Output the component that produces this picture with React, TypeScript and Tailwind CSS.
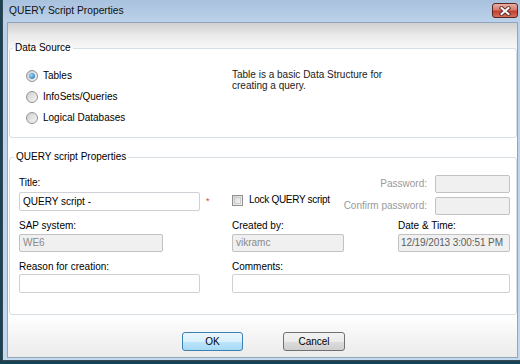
import clsx from 'clsx';

const Radio = ({ checked }: { checked?: boolean }) => (
  <span className="w-[12px] h-[12px] shrink-0 rounded-full border border-[#929292] bg-[linear-gradient(135deg,#cfcfcf,#f6f6f6)] flex items-center justify-center">
    {checked && (
      <span className="w-[6px] h-[6px] rounded-full bg-[radial-gradient(circle_at_35%_35%,#9bd6f6,#1a6eae)]" />
    )}
  </span>
);

const CheckBox = () => (
  <span className="w-[11px] h-[11px] shrink-0 border border-[#8e8f8f] bg-[linear-gradient(135deg,#d9d9d9,#f8f8f8)] p-[1px]">
    <span className="block w-full h-full border border-[#c9c9c9]" />
  </span>
);

const TextBox = ({ value, disabled, className }: { value?: string; disabled?: boolean; className?: string }) => (
  <div
    className={clsx(
      'flex items-center rounded-[2px] border whitespace-nowrap overflow-hidden',
      disabled ? 'bg-[#f0f0f0] border-[#c2c2c2] text-[#8a8a8a]' : 'bg-white border-[#cdd0d4] text-black',
      className
    )}
  >
    {value}
  </div>
);

const CloseButton = () => (
  <div className="self-start mt-[3px] w-[26px] h-[15px] rounded-[3px] border border-[#5c2520] bg-[linear-gradient(to_bottom,#e9b0a4,#d77b6f_45%,#c23f2f_55%,#d5705d)] flex items-center justify-center">
    <svg width="12" height="10" viewBox="0 0 12 10">
      <path d="M2.5 2 L9.5 8 M9.5 2 L2.5 8" stroke="#5a2823" strokeWidth="3.8" strokeLinecap="square" />
      <path d="M2.5 2 L9.5 8 M9.5 2 L2.5 8" stroke="#ffffff" strokeWidth="2" strokeLinecap="square" />
    </svg>
  </div>
);

const App = () => {
  return (
    <div className="w-[520px] h-[364px] overflow-hidden bg-[#164456] font-['Liberation_Sans',Arial,sans-serif] text-[10px] leading-[12px] text-black">
      <div className="ml-[2px] h-[361px] border-l border-b border-[#3a4650] bg-[linear-gradient(to_bottom,#a8c1dd,#bcd2ea_22px,#c4d8ee)] flex flex-col">
        {/* title bar */}
        <div className="h-[22px] shrink-0 flex items-center pl-[6px] pr-[2px]">
          <span className="text-[10.25px] text-[#111]">QUERY Script Properties</span>
          <div className="ml-auto self-stretch flex">
            <CloseButton />
          </div>
        </div>

        {/* client area */}
        <div className="ml-[4px] mr-[2px] mb-[2px] flex-1 border border-[#91a5bd] bg-[linear-gradient(to_bottom,#d0d0d0_0px,#e9e9e9_12px,#f7f7f7_24px,#ffffff_36px,#ffffff_292px,#ebebeb_100%)] flex flex-col pt-[19px] pl-[1px]">
          <fieldset className="bg-white border border-[#d5dfe5] rounded-[3px] min-w-0">
            <legend className="ml-[3px] px-[2px] leading-[12px]">Data Source</legend>
            <div className="flex pt-[11px] pb-[9px] pl-[16px]">
              <div className="w-[206px] flex flex-col">
                <div className="h-[21px] flex items-center gap-[5px]">
                  <Radio checked />
                  <span>Tables</span>
                </div>
                <div className="h-[21px] flex items-center gap-[5px]">
                  <Radio />
                  <span>InfoSets/Queries</span>
                </div>
                <div className="h-[21px] flex items-center gap-[5px]">
                  <Radio />
                  <span>Logical Databases</span>
                </div>
              </div>
              <p className="mt-[4px] leading-[11px] text-[#1a1a1a]">
                Table is a basic Data Structure for
                <br />
                creating a query.
              </p>
            </div>
          </fieldset>

          <fieldset className="mt-[13px] bg-white border border-[#d5dfe5] rounded-[3px] min-w-0">
            <legend className="ml-[4px] px-[2px] leading-[12px]">QUERY script Properties</legend>
            <div className="pt-[12px] pb-[21px] pl-[9px] pr-[6px]">
              {/* row A */}
              <div className="flex items-start">
                <div className="w-[213px] flex flex-col">
                  <span className="mt-[2px]">Title:</span>
                  <div className="mt-[3px] flex items-center">
                    <TextBox value="QUERY script -" className="w-[181px] h-[19px] px-[3px]" />
                    <span className="ml-[6px] text-[9px] leading-[9px] text-[#e23b3b]">*</span>
                  </div>
                </div>
                <div className="mt-[19px] flex items-center gap-[6px]">
                  <CheckBox />
                  <span className="tracking-[-0.3px]">Lock QUERY script</span>
                </div>
                <div className="ml-auto grid grid-cols-[auto_75px] gap-x-[8px] gap-y-[4px] items-center">
                  <span className="text-right text-[#9a9a9a]">Password:</span>
                  <TextBox disabled className="h-[18px]" />
                  <span className="text-right text-[#9a9a9a]">Confirm password:</span>
                  <TextBox disabled className="h-[18px]" />
                </div>
              </div>

              {/* row B */}
              <div className="mt-[5px] grid grid-cols-[213px_166px_112px]">
                <div className="flex flex-col">
                  <span>SAP system:</span>
                  <TextBox disabled value="WE6" className="mt-[2px] w-[144px] h-[18px] px-[3px]" />
                </div>
                <div className="flex flex-col">
                  <span>Created by:</span>
                  <TextBox disabled value="vikramc" className="mt-[2px] w-[112px] h-[18px] px-[3px]" />
                </div>
                <div className="flex flex-col">
                  <span>Date &amp; Time:</span>
                  <TextBox disabled value="12/19/2013 3:00:51 PM" className="mt-[2px] w-[112px] h-[18px] px-[2px] tracking-[-0.1px] !text-[#5e5e5e]" />
                </div>
              </div>

              {/* row C */}
              <div className="mt-[9px] grid grid-cols-[213px_278px]">
                <div className="flex flex-col">
                  <span>Reason for creation:</span>
                  <TextBox className="mt-[1px] w-[181px] h-[19px]" />
                </div>
                <div className="flex flex-col">
                  <span>Comments:</span>
                  <TextBox className="mt-[1px] w-full h-[19px]" />
                </div>
              </div>
            </div>
          </fieldset>

          <div className="mt-[17px] flex gap-[40px] pl-[173px]">
            <button className="w-[61px] h-[19px] rounded-[3px] border border-[#3c7fb1] bg-[linear-gradient(to_bottom,#eaf6fd,#d9f0fc_50%,#bee6fd_50%,#a7d9f5)] flex items-center justify-center text-[10px]">
              OK
            </button>
            <button className="w-[62px] h-[19px] rounded-[3px] border border-[#707070] bg-[linear-gradient(to_bottom,#f2f2f2,#ebebeb_50%,#dddddd_50%,#cfcfcf)] flex items-center justify-center text-[10px]">
              Cancel
            </button>
          </div>
        </div>
      </div>
    </div>
  );
};

export default App;
